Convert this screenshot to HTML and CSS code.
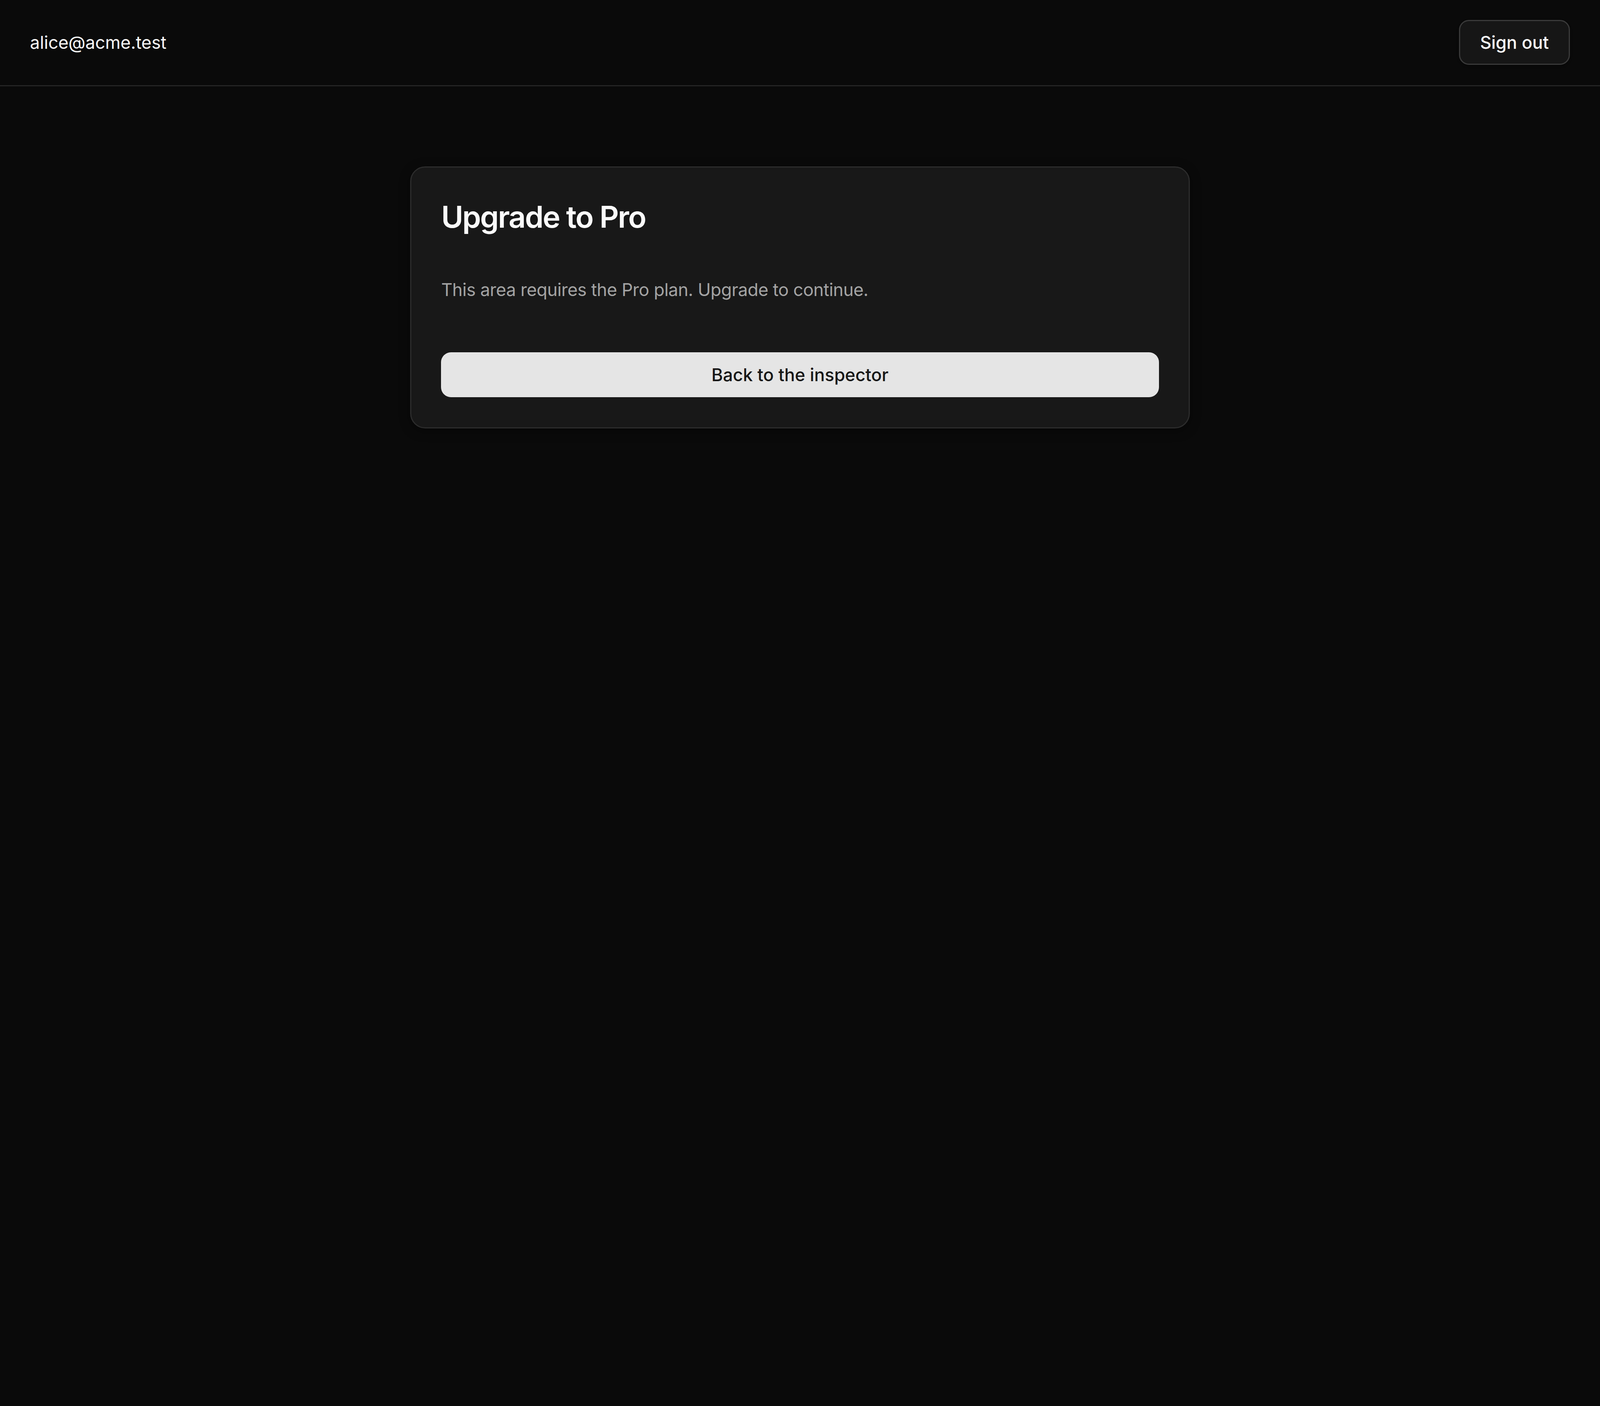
FILE: index.html
```html
<!DOCTYPE html>
<html lang="en">
<head>
<meta charset="utf-8">
<title>Upgrade to Pro</title>
<link rel="stylesheet" href="styles.css">
</head>
<body>
  <header class="topbar">
    <span class="user-email">alice@acme.test</span>
    <button class="btn-outline" type="button">Sign out</button>
  </header>
  <main class="main">
    <section class="card">
      <h1 class="card-title">Upgrade to Pro</h1>
      <p class="card-text">This area requires the Pro plan. Upgrade to continue.</p>
      <button class="btn-primary" type="button">Back to the inspector</button>
    </section>
  </main>
</body>
</html>
```
FILE: styles.css
```css
* {
  box-sizing: border-box;
}

html, body {
  margin: 0;
  padding: 0;
  background: #0a0a0a;
}

body {
  font-family: Inter, "Noto Sans", "Liberation Sans", sans-serif;
  color: #fafafa;
  min-height: 100vh;
}

.topbar {
  display: flex;
  align-items: center;
  justify-content: space-between;
  height: 220.8px;
  padding: 0 76.8px;
  border-bottom: 3.2px solid #242424;
}

.user-email {
  font-size: 44.8px;
  line-height: 64px;
  color: #fafafa;
}

.btn-outline {
  height: 115.2px;
  padding: 0 51.2px;
  border: 3.2px solid #3a3a3a;
  border-radius: 25.6px;
  background: #161616;
  color: #fafafa;
  font-family: inherit;
  font-size: 44.8px;
  font-weight: 500;
  line-height: 64px;
  box-shadow: 0 3px 6px rgba(0, 0, 0, 0.25);
}

.main {
  padding-top: 204.8px;
}

.card {
  width: 1996.8px;
  margin: 0 auto;
  padding: 76.8px;
  background: #181818;
  border: 3.2px solid #2c2c2c;
  border-radius: 38.4px;
  box-shadow: 0 6px 28px rgba(0, 0, 0, 0.4);
}

.card-title {
  margin: 0 0 102.4px;
  font-size: 76.8px;
  line-height: 102.4px;
  font-weight: 600;
  letter-spacing: -0.031em;
  color: #fafafa;
}

.card-text {
  margin: 0 0 128px;
  font-size: 44.8px;
  line-height: 64px;
  letter-spacing: -0.011em;
  color: #a3a3a3;
}

.btn-primary {
  display: block;
  width: 100%;
  height: 115.2px;
  border: none;
  border-radius: 25.6px;
  background: #e5e5e5;
  color: #171717;
  font-family: inherit;
  font-size: 44.8px;
  font-weight: 500;
  line-height: 64px;
}
```
